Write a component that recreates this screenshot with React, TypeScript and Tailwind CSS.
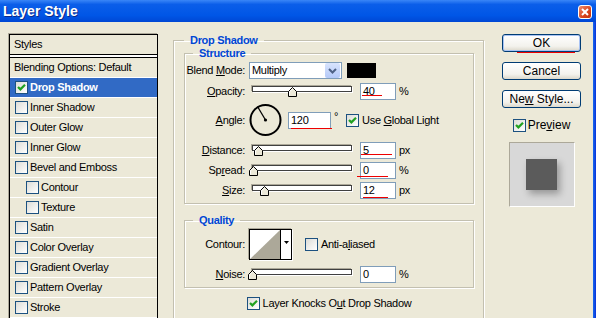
import React from "react";

const font = "font-['Liberation_Sans',Arial,sans-serif]";

function Check({ checked = false }: { checked?: boolean }) {
  return (
    <span className="flex h-[13px] w-[13px] shrink-0 items-center justify-center border border-[#1c5180] bg-[linear-gradient(135deg,#dcdcd7,#ffffff)]">
      {checked && (
        <svg width="9" height="9" viewBox="0 0 9 9">
          <path d="M1 4 L3.4 6.4 L8 1.8" fill="none" stroke="#21a121" strokeWidth="2.2" />
        </svg>
      )}
    </span>
  );
}

function Slider({ thumb }: { thumb: string }) {
  return (
    <div className="relative mt-[1px] h-[12px] w-[100px] shrink-0">
      <div className="h-[6px] w-full border border-[#404040] bg-white shadow-[-1px_-1px_0_#aca899,1px_1px_0_#ffffff]" />
      <svg className={`absolute top-[1px] ${thumb}`} width="10" height="10" viewBox="0 0 10 10">
        <path d="M0.5 9.5 V4.5 L4.5 0.5 L8.5 4.5 V9.5 Z" fill="#ece9d8" stroke="#000" />
        <path d="M1.5 8.5 V4.9 L4.5 1.9" fill="none" stroke="#fff" />
      </svg>
    </div>
  );
}

function Num({ value, w = "w-[36px]", line }: { value: string; w?: string; line?: string }) {
  return (
    <div className={`relative flex h-[17px] ${w} shrink-0 items-center border border-[#7f9db9] bg-white pl-[2px] text-[11px]`}>
      {value}
      {line && <span className={`absolute h-[1px] bg-[#ee0000] ${line}`} />}
    </div>
  );
}

function Btn({ children, def = false }: { children: React.ReactNode; def?: boolean }) {
  return (
    <div
      className={`relative flex h-[18px] w-[79px] items-center justify-center rounded-[3px] border border-[#003c74] bg-[linear-gradient(180deg,#ffffff,#f3f2ed_70%,#dcd8cb)] text-[12px] ${
        def ? "shadow-[inset_0_0_0_1px_#a9c3f3]" : ""
      }`}
    >
      {children}
      {def && <span className="absolute left-[14px] top-[17px] h-[1px] w-[58px] bg-[#ee0000]" />}
    </div>
  );
}

const fieldset = "border border-[#c3c0b0] shadow-[inset_1px_1px_0_#ffffff,1px_1px_0_#ffffff]";
const legend = "ml-[8px] px-[6px] text-[11px] font-bold leading-[13px] text-[#0046d5]";

const items = [
  { name: "Inner Shadow", sub: false },
  { name: "Outer Glow", sub: false },
  { name: "Inner Glow", sub: false },
  { name: "Bevel and Emboss", sub: false },
  { name: "Contour", sub: true },
  { name: "Texture", sub: true },
  { name: "Satin", sub: false },
  { name: "Color Overlay", sub: false },
  { name: "Gradient Overlay", sub: false },
  { name: "Pattern Overlay", sub: false },
  { name: "Stroke", sub: false },
];

export default function App() {
  return (
    <div className={`h-[318px] w-[596px] overflow-hidden bg-[#ece9d8] text-[11px] tracking-[-0.3px] text-black ${font}`}>
      {/* title bar */}
      <div className="flex h-[22px] items-start bg-[linear-gradient(180deg,#3a86f7_0%,#0b5ee9_20%,#0056e6_70%,#0047d4_100%)]">
        <span className="ml-[3px] mt-[3px] text-[14px] font-bold leading-[16px] tracking-normal text-white [text-shadow:1px_1px_0_#0a2a8a]">
          Layer Style
        </span>
        <div className="ml-auto mr-[4px] mt-[5px] flex h-[14px] w-[14px] items-center justify-center rounded-[3px] border border-white bg-[linear-gradient(135deg,#f08d6e,#d8441c_60%,#c2330e)]">
          <svg width="8" height="8" viewBox="0 0 8 8">
            <path d="M1 1 L7 7 M7 1 L1 7" stroke="#fff" strokeWidth="2" />
          </svg>
        </div>
      </div>

      <div className="flex h-[296px]">
        {/* styles list */}
        <div className="ml-[9px] mt-[12px] w-[149px] shrink-0 self-start border border-black shadow-[-1px_-1px_0_#aca899]">
          <div className="flex h-[20px] items-center border-b border-black pl-[4px]">Styles</div>
          <div className="h-[2px] bg-white" />
          <div className="flex h-[21px] items-center border-t border-b border-t-black border-b-white pl-[4px]">
            Blending Options: Default
          </div>
          <div className="flex h-[20px] items-center border-b border-white bg-[#316ac5] pl-[5px] font-bold text-white">
            <Check checked />
            <span className="ml-[2px]">Drop Shadow</span>
          </div>
          {items.map((it) => (
            <div
              key={it.name}
              className={`flex h-[20px] items-center border-b border-white ${it.sub ? "pl-[16px]" : "pl-[5px]"}`}
            >
              <Check />
              <span className="ml-[2px]">{it.name}</span>
            </div>
          ))}
        </div>

        {/* settings */}
        <div className="ml-[15px] mt-[12px] w-[311px] shrink-0">
          <fieldset className={`${fieldset} h-[300px] pl-[10px] pr-[9px]`}>
            <legend className="ml-0 px-[6px] text-[11px] font-bold leading-[13px] text-[#0046d5]">Drop Shadow</legend>

            <fieldset className={`${fieldset} w-[290px] pb-[4px]`}>
              <legend className={legend}>Structure</legend>

              <div className="mt-[2px] flex h-[17px] items-center">
                <span className="w-[60px] text-right">
                  Blend <span className="underline underline-offset-1">M</span>ode:
                </span>
                <div className="ml-[4px] flex h-[17px] w-[93px] items-center border border-[#7f9db9] bg-white pl-[2px]">
                  Multiply
                  <div className="ml-auto mr-[1px] flex h-[15px] w-[15px] items-center justify-center rounded-[2px] bg-[linear-gradient(180deg,#d8e4fd,#b4c9f8)]">
                    <svg width="9" height="6" viewBox="0 0 9 6">
                      <path d="M1 1 L4.5 4.5 L8 1" fill="none" stroke="#4d6185" strokeWidth="2" />
                    </svg>
                  </div>
                </div>
                <div className="ml-[5px] h-[15px] w-[29px] bg-black" />
              </div>

              <div className="mt-[4px] flex h-[17px] items-center">
                <span className="w-[60px] text-right">
                  <span className="underline underline-offset-1">O</span>pacity:
                </span>
                <div className="ml-[7px]">
                  <Slider thumb="left-[36px]" />
                </div>
                <div className="ml-[8px]">
                  <Num value="40" line="left-[1px] top-[11px] w-[20px]" />
                </div>
                <span className="ml-[3px]">%</span>
              </div>

              <div className="mt-[3px] flex h-[34px] items-center">
                <span className="w-[60px] text-right">
                  <span className="underline underline-offset-1">A</span>ngle:
                </span>
                <svg className="ml-[4px]" width="33" height="34" viewBox="0 0 33 34">
                  <circle cx="16.5" cy="17" r="15" fill="none" stroke="#000" strokeWidth="2" />
                  <path d="M16.5 17 L8.5 3.5" stroke="#000" strokeWidth="1.3" />
                  <circle cx="16.5" cy="17" r="1.6" fill="#000" />
                </svg>
                <div className="ml-[6px]">
                  <Num value="120" w="w-[43px]" line="left-[2px] top-[15px] w-[41px]" />
                </div>
                <span className="mb-[8px] ml-[3px]">°</span>
                <div className="ml-[8px]">
                  <Check checked />
                </div>
                <span className="ml-[3px]">
                  Use <span className="underline underline-offset-1">G</span>lobal Light
                </span>
              </div>

              <div className="mt-[5px] flex h-[17px] items-center">
                <span className="w-[60px] text-right">
                  <span className="underline underline-offset-1">D</span>istance:
                </span>
                <div className="ml-[7px]">
                  <Slider thumb="left-[2px]" />
                </div>
                <div className="ml-[8px]">
                  <Num value="5" line="left-[0px] top-[11px] w-[31px]" />
                </div>
                <span className="ml-[3px]">px</span>
              </div>

              <div className="mt-[3px] flex h-[17px] items-center">
                <span className="w-[60px] text-right">
                  Sp<span className="underline underline-offset-1">r</span>ead:
                </span>
                <div className="ml-[7px]">
                  <Slider thumb="-left-[3px]" />
                </div>
                <div className="ml-[8px]">
                  <Num value="0" line="-left-[4px] top-[13px] w-[31px]" />
                </div>
                <span className="ml-[3px]">%</span>
              </div>

              <div className="mt-[3px] flex h-[17px] items-center">
                <span className="w-[60px] text-right">
                  <span className="underline underline-offset-1">S</span>ize:
                </span>
                <div className="ml-[7px]">
                  <Slider thumb="left-[8px]" />
                </div>
                <div className="ml-[8px]">
                  <Num value="12" line="left-[2px] top-[14px] w-[25px]" />
                </div>
                <span className="ml-[3px]">px</span>
              </div>
            </fieldset>

            <fieldset className={`${fieldset} mt-[10px] w-[290px] pb-[4px]`}>
              <legend className={legend}>Quality</legend>

              <div className="mt-[2px] flex h-[31px] items-center">
                <span className="w-[60px] text-right">Contour:</span>
                <div className="ml-[4px] flex h-[31px] w-[43px] border border-black shadow-[-1px_-1px_0_#aca899,1px_1px_0_#ffffff]">
                  <svg width="30" height="29" viewBox="0 0 30 29">
                    <rect width="30" height="29" fill="#fff" />
                    <path d="M0 29 L30 0 L30 29 Z" fill="#aca899" />
                  </svg>
                  <div className="flex w-[11px] justify-center border-l border-black bg-white pt-[11px]">
                    <svg width="5" height="3" viewBox="0 0 5 3">
                      <path d="M0 0 H5 L2.5 3 Z" fill="#000" />
                    </svg>
                  </div>
                </div>
                <div className="ml-[13px]">
                  <Check />
                </div>
                <span className="ml-[3px]">
                  Anti-a<span className="underline underline-offset-1">l</span>iased
                </span>
              </div>

              <div className="mt-[6px] flex h-[17px] items-center">
                <span className="w-[60px] text-right">
                  <span className="underline underline-offset-1">N</span>oise:
                </span>
                <div className="ml-[7px]">
                  <Slider thumb="-left-[4px]" />
                </div>
                <div className="ml-[8px]">
                  <Num value="0" />
                </div>
                <span className="ml-[3px]">%</span>
              </div>
            </fieldset>

            <div className="mt-[7px] flex w-[290px] items-center justify-center">
              <Check checked />
              <span className="ml-[3px]">
                Layer Knocks O<span className="underline underline-offset-1">u</span>t Drop Shadow
              </span>
            </div>
          </fieldset>
        </div>

        {/* buttons */}
        <div className="ml-[18px] mt-[12px] flex w-[79px] shrink-0 flex-col items-center tracking-normal">
          <Btn def>OK</Btn>
          <div className="mt-[10px]">
            <Btn>Cancel</Btn>
          </div>
          <div className="mt-[10px]">
            <Btn>
              Ne<span className="underline underline-offset-1">w</span>&nbsp;Style...
            </Btn>
          </div>
          <div className="mt-[8px] flex items-center text-[12px]">
            <Check checked />
            <span className="ml-[2px]">
              Pre<span className="underline underline-offset-1">v</span>iew
            </span>
          </div>
          <div className="mt-[8px] flex h-[65px] w-[66px] items-center justify-center border border-t-[#aca899] border-l-[#aca899] border-b-white border-r-white bg-[#d8d8d8]">
            <div className="h-[31px] w-[31px] bg-[#5b5b5b] shadow-[3px_4px_7px_rgba(0,0,0,0.3)]" />
          </div>
        </div>

        <div className="ml-auto w-[3px] bg-[linear-gradient(90deg,#166aee,#0831d9)]" />
      </div>
    </div>
  );
}
